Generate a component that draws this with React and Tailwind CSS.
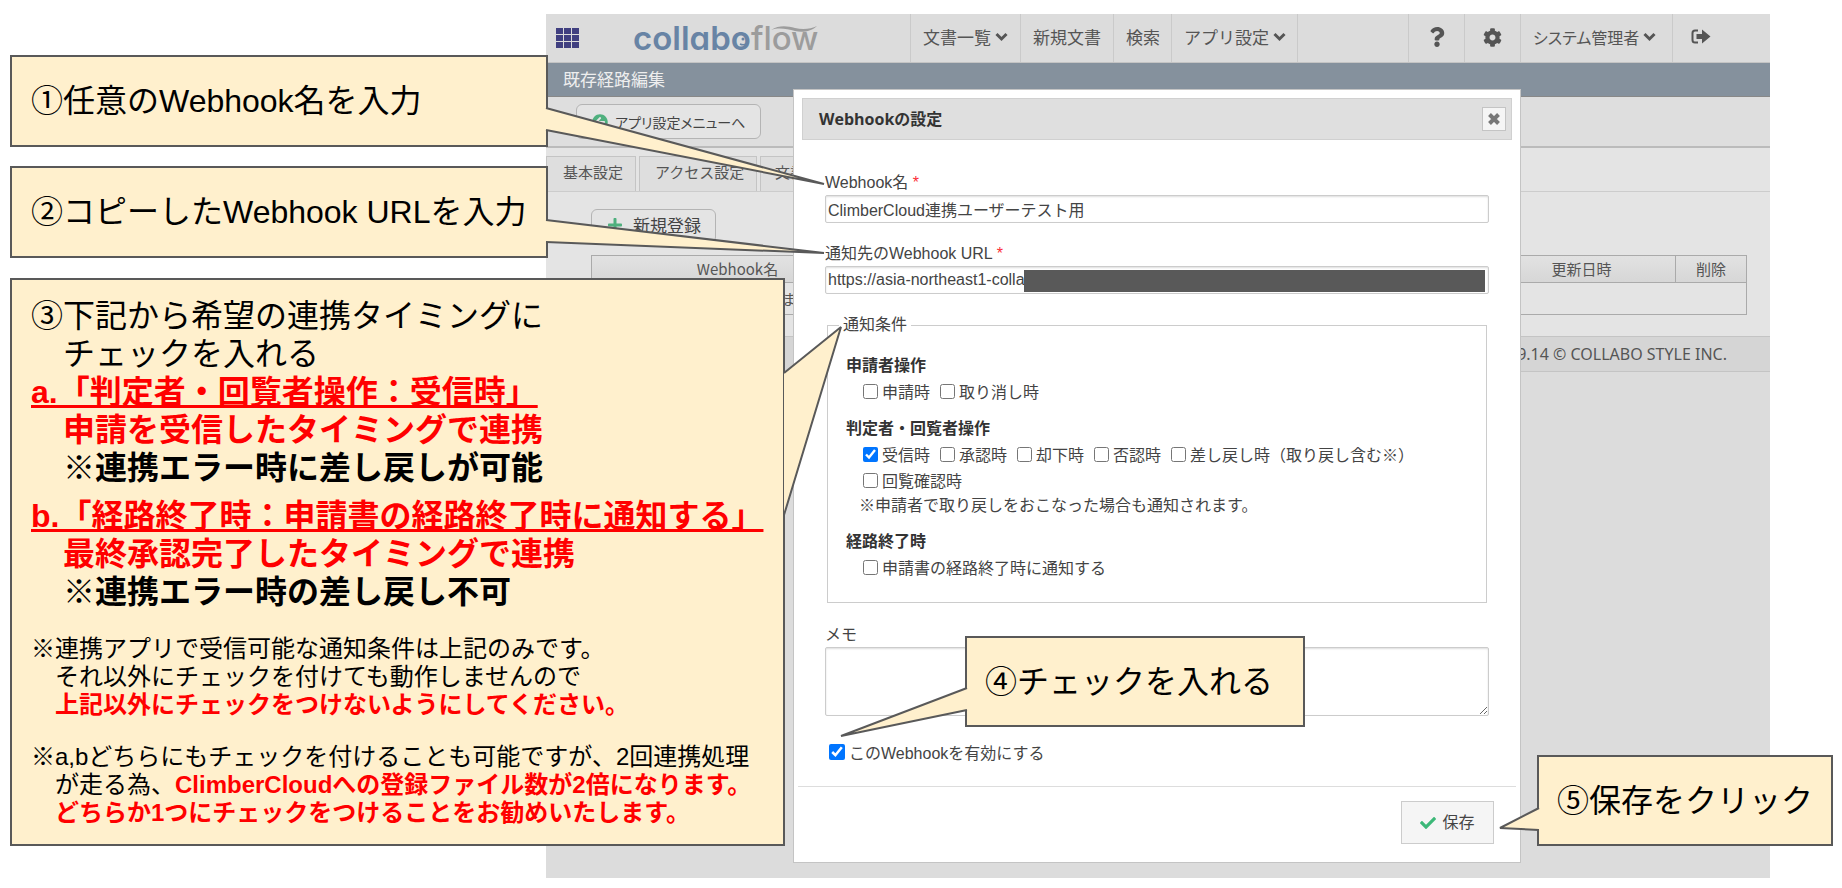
import { useState } from 'react'
import { FaCog, FaQuestion, FaCheck, FaPlus, FaArrowCircleLeft } from 'react-icons/fa'

const steps = {
  name: '①任意のWebhook名を入力',
  url: '②コピーしたWebhook URLを入力',
  enable: '④チェックを入れる',
  save: '⑤保存をクリック',
}

// Beige note with a pointer. The pointer's fill covers the box border.
const Callout = ({ className, children, tail }) => (
  <div className={`absolute z-20 border-2 border-[#595959] bg-[#fff0cd] font-['Liberation_Sans','Noto_Sans_CJK_JP',sans-serif] text-black ${className}`}>
    {children}
    {tail}
  </div>
)

const Tail = ({ className, width, height, points }) => (
  <svg className={`absolute overflow-visible pointer-events-none ${className}`} width={width} height={height} aria-hidden="true">
    <polyline points={points} fill="#fff0cd" stroke="#595959" strokeWidth="2" strokeLinejoin="bevel" />
  </svg>
)

const ChevronIcon = () => (
  <svg width="13" height="10" viewBox="0 0 13 10" fill="none" stroke="currentColor" strokeWidth="3" aria-hidden="true">
    <path d="M1.5 2 L6.5 7 L11.5 2" />
  </svg>
)

const CloseIcon = () => (
  <svg width="12" height="12" viewBox="0 0 12 12" fill="none" stroke="currentColor" strokeWidth="4" aria-hidden="true">
    <path d="M1.5 1.5 L10.5 10.5 M10.5 1.5 L1.5 10.5" />
  </svg>
)

const LogoutIcon = () => (
  <svg width="20" height="16" viewBox="0 0 20 16" role="img" aria-label="ログアウト">
    <path d="M7 1.5 H4 Q1.5 1.5 1.5 4 V11 Q1.5 13.5 4 13.5 H7" fill="none" stroke="currentColor" strokeWidth="2" />
    <path d="M5.5 5 H11 V0.5 L19.5 7.5 L11 14.5 V10 H5.5Z" fill="currentColor" />
  </svg>
)

const Logo = () => (
  <a href="#" className="relative flex items-center font-['Inter',sans-serif] text-[33px] leading-none [font-feature-settings:'cv11']">
    <span className="font-semibold text-[#6884a5]">collabo</span>
    <span className="font-medium text-[#9c9c9c]">flow</span>
    <svg className="absolute left-0 top-0 overflow-visible" width="184" height="34" viewBox="0 0 184 34" aria-hidden="true">
      <path d="M138 8 C146 3 154 4 162 6 C170 8 178 7 184 4 C179 9 170 11 162 9 C154 7 146 5 138 8Z" fill="#9c9c9c" />
      <circle cx="110" cy="17" r="1.5" fill="#6884a5" />
      <path d="M107 22 Q111 24 114 21" fill="none" stroke="#6884a5" strokeWidth="1.5" />
    </svg>
  </a>
)

const NavItem = ({ children, arrow, className = '' }) => (
  <a href="#" className={`flex h-full items-center gap-1 border-l border-[#cacaca] pb-[2px] ${className}`}>
    {children}
    {arrow && <ChevronIcon />}
  </a>
)

const Check = ({ label, defaultChecked }) => (
  <label className="flex items-center gap-1">
    <input type="checkbox" defaultChecked={defaultChecked} className="mb-1 size-[15px]" />
    {label}
  </label>
)

const Header = () => (
  <header className="flex h-[49px] items-stretch border-b border-[#c4c4c4] bg-[#dcdcdc] text-[17px] text-[#555]">
    <div className="flex flex-1 items-center">
      <button aria-label="アプリ一覧" className="ml-[10px] mr-[54px]">
        <svg width="23" height="20" viewBox="0 0 23 20" fill="#403f80">
          {[0, 8, 16].map((x) => [0, 7, 14].map((y) => <rect key={`${x}-${y}`} x={x} y={y} width="7" height="6" />))}
        </svg>
      </button>
      <Logo />
    </div>
    <nav className="flex">
      <NavItem arrow className="w-[110px] pl-3">文書一覧</NavItem>
      <NavItem className="w-[93px] pl-3">新規文書</NavItem>
      <NavItem className="w-[58px] pl-3">検索</NavItem>
      <NavItem arrow className="w-[127px] border-r pl-3">アプリ設定</NavItem>
    </nav>
    <nav className="ml-[110px] flex">
      <NavItem className="w-[56px] justify-center"><FaQuestion size={20} aria-label="ヘルプ" /></NavItem>
      <NavItem className="w-[56px] justify-center"><FaCog size={19} aria-label="設定" /></NavItem>
      <NavItem arrow className="w-[152px] pl-3 text-base [font-feature-settings:'palt']">システム管理者</NavItem>
      <NavItem className="w-[98px] pl-[18px]"><LogoutIcon /></NavItem>
    </nav>
  </header>
)

const WebhookDialog = () => {
  const [name, setName] = useState('ClimberCloud連携ユーザーテスト用')
  const [url, setUrl] = useState('https://asia-northeast1-colla')
  const inputStyle = 'block w-full rounded-[2px] border border-[#ccc] bg-white px-[2px] shadow-[inset_0_1px_2px_#ddd]'

  return (
    <form
      role="dialog"
      aria-labelledby="dialog-title"
      onSubmit={(e) => e.preventDefault()}
      className="absolute left-[247px] right-[249px] top-[75px] bottom-[15px] z-10 border border-[#c4c4c4] bg-white font-['Liberation_Sans','Noto_Sans_CJK_JP',sans-serif] text-base leading-6 text-[#444]"
    >
      <div className="mx-2 mt-2 flex h-[42px] items-center justify-between border border-[#d0d0d0] bg-[#dfdfdf] pl-4 pr-[5px]">
        <h2 id="dialog-title" className="font-['Open_Sans','Noto_Sans_CJK_JP',sans-serif] text-base font-bold text-[#333]">Webhookの設定</h2>
        <button type="button" aria-label="閉じる" className="flex h-6 w-6 items-center justify-center border border-[#c4c4c4] bg-[#f5f5f5] text-[#777]">
          <CloseIcon />
        </button>
      </div>

      <div className="px-[31px] pt-[31px]">
        <label htmlFor="webhook-name">Webhook名 <span className="text-red-500">*</span></label>
        <input id="webhook-name" value={name} onChange={(e) => setName(e.target.value)} className={`${inputStyle} h-7`} />

        <label htmlFor="webhook-url" className="mt-[19px] block">通知先のWebhook URL <span className="text-red-500">*</span></label>
        <div className="relative">
          <input id="webhook-url" value={url} onChange={(e) => setUrl(e.target.value)} className={`${inputStyle} h-7`} />
          <span className="absolute left-[199px] right-[4px] top-1 h-[22px] bg-[#595959]"></span>
        </div>

        <fieldset className="mx-[2px] mt-[19px] h-[290px] border border-[#ccc] pl-[18px]">
          <legend className="-ml-[7px] px-1">通知条件</legend>
          <h3 className="mt-[17px] font-bold text-[#333]">申請者操作</h3>
          <div className="flex gap-[10px] pl-[17px] pt-[3px]">
            <Check label="申請時" />
            <Check label="取り消し時" />
          </div>
          <h3 className="mt-3 font-bold text-[#333]">判定者・回覧者操作</h3>
          <div className="flex flex-wrap gap-x-[10px] gap-y-[2px] pl-[17px] pt-[3px]">
            <Check label="受信時" defaultChecked />
            <Check label="承認時" />
            <Check label="却下時" />
            <Check label="否認時" />
            <Check label="差し戻し時（取り戻し含む※）" />
            <Check label="回覧確認時" />
          </div>
          <p className="pl-[13px]">※申請者で取り戻しをおこなった場合も通知されます。</p>
          <h3 className="mt-3 font-bold text-[#333]">経路終了時</h3>
          <div className="flex pl-[17px] pt-[3px]">
            <Check label="申請書の経路終了時に通知する" />
          </div>
        </fieldset>

        <label htmlFor="webhook-memo" className="mt-5 block">メモ</label>
        <textarea id="webhook-memo" className={`${inputStyle} h-[69px]`}></textarea>
        <label className="mt-[26px] flex items-center gap-1 pl-1">
          <input type="checkbox" defaultChecked className="mb-1 size-4" />
          このWebhookを有効にする
        </label>
      </div>

      <div className="mx-1 mt-5 flex justify-end border-t border-[#ddd] pr-[22px] pt-[14px]">
        <button className="flex h-[43px] w-[93px] items-center justify-center gap-[6px] border border-[#ccc] bg-[#f5f5f5]">
          <FaCheck size={16} className="text-[#3cb878]" />
          保存
        </button>
      </div>

      <Callout
        className="left-[171px] top-[546px] flex h-[91px] w-[340px] items-center pl-[18px] text-[32px]"
        tail={<Tail className="-left-[126px] top-[50px]" width="126" height="48" points="126,0 0,48 126,22" />}
      >
        {steps.enable}
      </Callout>
      <Callout
        className="left-[calc(100%+17px)] top-[665px] flex h-[91px] w-[296px] items-center pl-[18px] text-[32px]"
        tail={<Tail className="-left-[39px] top-[51px]" width="39" height="22" points="39,0 0,20 39,22" />}
      >
        {steps.save}
      </Callout>
    </form>
  )
}

function App() {
  return (
    <div className="relative min-h-screen bg-white py-[14px] pl-[546px] pr-[72px] font-['Noto_Sans_CJK_JP','Liberation_Sans',sans-serif]">
      <div className="relative min-h-[864px] bg-[#dcdcdc] text-[#555]">
        <Header />
        <h1 className="flex h-[34px] items-center border-b border-[#888] bg-[#85919d] pb-[2px] pl-[17px] text-[17px] text-[#eee]">既存経路編集</h1>

        <div className="flex h-[51px] items-center border-b-2 border-[#bbb] bg-[#dedede] pl-[30px]">
          <button className="flex h-[35px] w-[185px] items-center gap-[7px] rounded-md border border-[#b4b4b4] bg-[#e4e4e4] pl-[15px] text-sm text-[#444]">
            <FaArrowCircleLeft size={16} className="shrink-0 text-[#4fb07e]" />
            <span className="whitespace-nowrap [font-feature-settings:'palt']">アプリ設定メニューへ</span>
          </button>
        </div>

        <div className="bg-[#e4e4e4] pt-2">
          <div className="flex h-9 gap-[3px] border-b border-[#ccc] text-[15px]">
            <a href="#" className="flex w-[90px] items-center border border-b-0 border-[#c4c4c4] bg-[#dedede] pb-1 pl-4">基本設定</a>
            <a href="#" className="flex w-[118px] items-center border border-b-0 border-[#c4c4c4] bg-[#dedede] pb-1 pl-[15px]">アクセス設定</a>
            <a href="#" className="flex w-[90px] items-center border border-b-0 border-[#c4c4c4] bg-[#dedede] pb-1 pl-[14px]">文書設定</a>
          </div>
          <div className="pb-[21px] pl-[45px] pr-[23px] pt-[17px]">
            <button className="flex h-[34px] w-[125px] items-center gap-[10px] rounded-md border border-[#b4b4b4] bg-[#e4e4e4] pb-[2px] pl-[15px] text-[17px] text-[#444]">
              <FaPlus size={16} className="text-[#4fb07e]" />
              新規登録
            </button>
            <table className="mt-3 w-full table-fixed border-collapse border border-[#aaa] text-[15px]">
              <thead>
                <tr className="h-[27px] bg-linear-to-b from-[#e2e2e2] to-[#d6d6d6]">
                  <th className="w-[292px] border border-[#aaa] font-normal leading-5">Webhook名</th>
                  <th className="border border-[#aaa]"></th>
                  <th className="w-[188px] border border-[#aaa] font-normal leading-5">更新日時</th>
                  <th className="w-[71px] border border-[#aaa] font-normal leading-5">削除</th>
                </tr>
              </thead>
              <tbody>
                <tr className="h-8">
                  <td colSpan="4" className="pl-[190px] leading-5">ま</td>
                </tr>
              </tbody>
            </table>
          </div>
        </div>

        <footer className="h-9 border-b border-t border-[#c4c4c4] bg-[#d5d5d5] pr-[43px] text-right font-['Noto_Sans',sans-serif] text-base leading-[34px]">
          9.14 © COLLABO STYLE INC.
        </footer>

        <WebhookDialog />
      </div>

      <Callout
        className="left-[10px] top-[55px] flex h-[92px] w-[538px] items-center pl-[19px] text-[32px]"
        tail={<Tail className="left-[534px] top-[51px]" width="280" height="78" points="0,0 278,76 0,22" />}
      >
        {steps.name}
      </Callout>
      <Callout
        className="left-[10px] top-[166px] flex h-[92px] w-[538px] items-center pl-[19px] text-[32px]"
        tail={<Tail className="left-[534px] top-[52px]" width="280" height="34" points="0,0 278,33 0,22" />}
      >
        {steps.url}
      </Callout>

      <Callout
        className="left-[10px] top-[278px] h-[568px] w-[775px] pl-[19px] pt-[17px] text-[32px] leading-[38px]"
        tail={<Tail className="left-[772px] top-[47px]" width="57" height="188" points="0,46 57,0 0,188" />}
      >
        <p>③下記から希望の連携タイミングに</p>
        <p className="pl-8">チェックを入れる</p>
        <p className="font-bold text-[#f00] underline">a.「判定者・回覧者操作：受信時」</p>
        <p className="pl-8 font-bold text-[#f00]">申請を受信したタイミングで連携</p>
        <p className="pl-8 font-bold">※連携エラー時に差し戻しが可能</p>
        <p className="mt-[10px] font-bold text-[#f00] underline">b.「経路終了時：申請書の経路終了時に通知する」</p>
        <p className="pl-8 font-bold text-[#f00]">最終承認完了したタイミングで連携</p>
        <p className="pl-8 font-bold">※連携エラー時の差し戻し不可</p>

        <div className="mt-6 text-2xl leading-7">
          <p>※連携アプリで受信可能な通知条件は上記のみです。</p>
          <p className="pl-6">それ以外にチェックを付けても動作しませんので</p>
          <p className="pl-6 font-bold text-[#f00]">上記以外にチェックをつけないようにしてください。</p>
        </div>
        <div className="mt-6 text-2xl leading-7">
          <p>※a,bどちらにもチェックを付けることも可能ですが、2回連携処理</p>
          <p className="pl-6">
            が走る為、<b className="text-[#f00]">ClimberCloudへの登録ファイル数が2倍になります。</b>
          </p>
          <p className="pl-6 font-bold text-[#f00]">どちらか1つにチェックをつけることをお勧めいたします。</p>
        </div>
      </Callout>
    </div>
  )
}

export default App
